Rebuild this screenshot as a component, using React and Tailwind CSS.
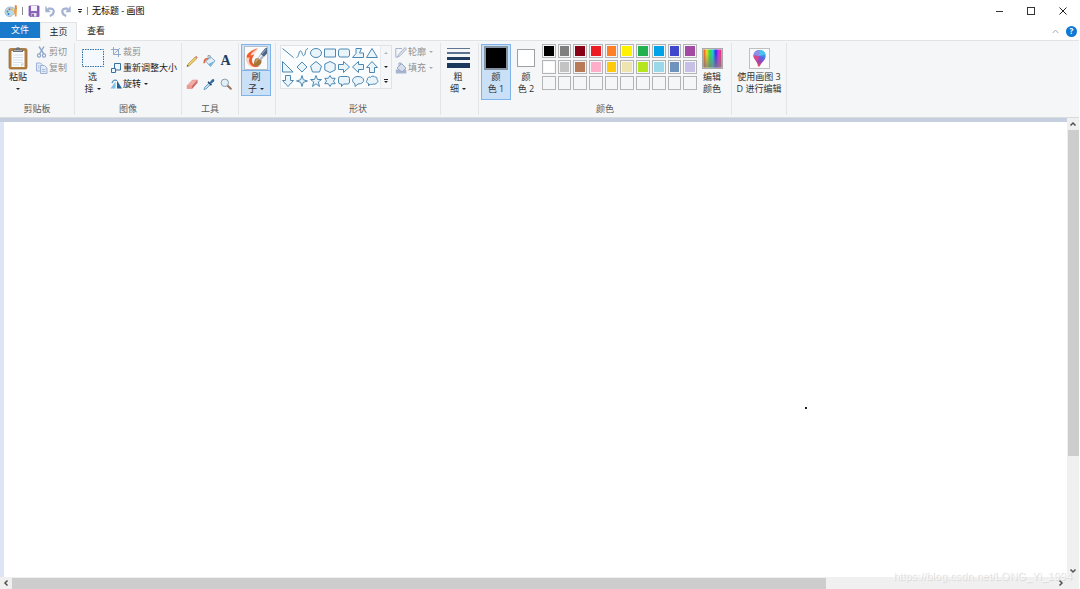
import React, { useState } from 'react';

const PALETTE = [
    '#000000', '#7f7f7f', '#880015', '#ed1c24', '#ff7f27', '#fff200', '#22b14c', '#00a2e8', '#3f48cc', '#a349a4',
    '#ffffff', '#c3c3c3', '#b97a57', '#ffaec9', '#ffc90e', '#efe4b0', '#b5e61d', '#99d9ea', '#7092be', '#c8bfe7',
    null, null, null, null, null, null, null, null, null, null,
];

// Outlines are drawn on a 14 x 14 grid
const SHAPES = [
    { name: '直线', d: 'M1.500 2.500 12.500 11.500' },
    { name: '曲线', d: 'M1.500 11.500C4 11.500 3.500 5 5.500 5S7 10.500 9 9.500 9.500 3 13 2.500' },
    { name: '椭圆形', d: 'M1.500 7a5.500 4.500 0 1 0 11 0a5.500 4.500 0 1 0-11 0Z' },
    { name: '矩形', d: 'M1.500 3h11v8h-11Z' },
    { name: '圆角矩形', d: 'M3.500 3h7a2 2 0 0 1 2 2v4a2 2 0 0 1-2 2h-7a2 2 0 0 1-2-2v-4a2 2 0 0 1 2-2Z' },
    { name: '多边形', d: 'M5 2.500h5.500L8.500 7h4v4.500h-11L5 7.500Z' },
    { name: '三角形', d: 'M7 2.500 12.500 11.500h-11Z' },
    { name: '直角三角形', d: 'M1.500 1.500v10.500h10.500Z' },
    { name: '菱形', d: 'M7 2 12 7 7 12 2 7Z' },
    { name: '五边形', d: 'M7 1.500 12.500 6 10.500 12h-7L1.500 6Z' },
    { name: '六边形', d: 'M7 1.500 12.200 4v6L7 12.500 1.800 10V4Z' },
    { name: '右箭头', d: 'M1.500 4.500h5V1.500L12.500 7l-6 5.500v-3h-5Z' },
    { name: '左箭头', d: 'M12.500 4.500h-5V1.500L1.500 7l6 5.500v-3h5Z' },
    { name: '向上箭头', d: 'M4.500 12.500v-5h-3L7 1.500l5.500 6h-3v5Z' },
    { name: '向下箭头', d: 'M4.500 1.500v5h-3l5.500 6 5.500-6h-3v-5Z' },
    { name: '四角星形', d: 'M7 1.500 8.300 5.700 12.500 7 8.300 8.300 7 12.500 5.700 8.300 1.500 7 5.700 5.700Z' },
    { name: '五角星形', d: 'M7 1.500 8.500 5.500h4L9.300 8l1.200 4.500L7 9.800 3.500 12.500 4.700 8 1.500 5.500h4Z' },
    { name: '六角星形', d: 'M7 1.500 8.700 4.300h3.500L10.500 7l1.700 2.700H8.700L7 12.500 5.300 9.700H1.800L3.500 7 1.800 4.300h3.500Z' },
    { name: '圆角矩形标注', d: 'M3.500 2.500h7a2 2 0 0 1 2 2V8a2 2 0 0 1-2 2H6.500l-2 2.500V10h-1a2 2 0 0 1-2-2V4.500a2 2 0 0 1 2-2Z' },
    { name: '椭圆形标注', d: 'M4 9.800C0 8 1 2.500 7 2.500c7.500 0 7.500 7.500 0 7.500L4 12.500Z' },
    { name: '云形标注', d: 'M3.500 9.500C1 9 1 6.500 2.500 6 1.500 3.500 4.500 2.500 5.500 3.300 7 1.500 9 2 9.500 3c2-.5 3 1 2.500 2.500 1.500 1 1 3-.5 3.500-.5 1.500-2.500 1.500-3.500.8C7 11 5.500 10.500 5 10l-1.500 2Z' },
];

const Caret = ({ className = 'text-[#222]' }) => (
    <svg viewBox="0 0 4 2" className={`w-1 h-[2px] shrink-0 ${className}`} fill="currentColor">
        <path d="M0 0h4L2 2Z" />
    </svg>
);

const Chevron = ({ rotate = 'rotate-0' }) => (
    <svg viewBox="0 0 8 8" className={`w-2 h-2 ${rotate}`} fill="none" stroke="#505050" strokeWidth="1.500">
        <path d="M1.500 5.500 4 3 6.500 5.500" />
    </svg>
);

const AppIcon = () => (
    <svg viewBox="0 0 14 14" className="w-[14px] h-[14px]">
        <path d="M1 8C1 4.500 4 2.500 7.500 3c3 .4 4.500 2.500 4 5-.4 2-2 2-2.700 2.700C8 11.500 7.500 13 5 12.500 2.500 12 1 10.500 1 8Z" fill="#b9d9ec" stroke="#7fa9c4" strokeWidth=".6" />
        <circle cx="3.500" cy="7.500" r="1" fill="#36a35c" />
        <circle cx="5.500" cy="5.200" r="1" fill="#e0503a" />
        <circle cx="8" cy="5.500" r="1" fill="#f2b531" />
        <circle cx="4.500" cy="10" r="1" fill="#3975c6" />
        <path d="M9.800 6.500 11.500 4h1.500L12.500 12.500h-1.500Z" fill="#eda04a" />
        <path d="M10.800 1 12.800 1.500v3.300h-2Z" fill="#e0853c" />
    </svg>
);

const SaveIcon = () => (
    <svg viewBox="0 0 12 12" className="w-3 h-3">
        <path d="M1 1h10v10.500H2L1 10.500Z" fill="#8a63b8" stroke="#7a57a8" strokeWidth=".8" />
        <path d="M3 1h6v5H3Z" fill="#f5f1fa" />
        <path d="M3.500 8h5v3.500h-5Z" fill="#e9e2f2" />
        <path d="M4.300 8.800h1.400v2.700H4.300Z" fill="#5b3b8a" />
    </svg>
);

const UndoIcon = ({ flip = '' }) => (
    <svg viewBox="0 0 12 12" className={`w-3 h-3 ${flip}`} fill="none">
        <path d="M4 3.700h2.500c4.500 0 4.300 5.500-.7 7.300" stroke="#a4b3d1" strokeWidth="2.200" />
        <path d="M1.300.8v6.500h5.500Z" fill="#a4b3d1" />
    </svg>
);

const PasteIcon = () => (
    <svg viewBox="0 0 20 24" className="w-5 h-6">
        <rect x="1" y="2.500" width="18" height="20.500" rx="1.500" fill="#b5803f" stroke="#976730" strokeWidth=".7" />
        <path d="M3.500 5h13v16h-13Z" fill="#fbfcfe" />
        <path d="M5 9h10M5 11.500h10M5 14h10M5 16.500h10M5 19h6" stroke="#d3dfeb" strokeWidth="1" />
        <path d="M13 21v-3.500h3.500Z" fill="#ccd7e4" />
        <path d="M5 6V3.500h2.500C8 .5 12 .5 12.500 3.500H15V6Z" fill="#6d7278" />
        <path d="M6 4.500h8" stroke="#a9aeb4" />
    </svg>
);

const CutIcon = () => (
    <svg viewBox="0 0 12 12" className="w-3 h-3" fill="none" stroke="#8fa6cb">
        <path d="M3 .5 7.800 8M8 .5 3.500 8" strokeWidth="1.400" />
        <circle cx="3" cy="9.500" r="1.600" strokeWidth="1.200" />
        <circle cx="8" cy="9.500" r="1.600" strokeWidth="1.200" />
    </svg>
);

const CopyIcon = () => (
    <svg viewBox="0 0 12 12" className="w-3 h-3" fill="#e2eaf6" stroke="#9db2d6">
        <path d="M.5 1h4l2 2v6h-6Z" />
        <path d="M4.500 3.500h4l2.500 2.500v5.500H4.500Z" />
        <path d="M6 7.500h3.500M6 9.500h3.500M2 4h1.500M2 6h1.500" strokeWidth=".8" />
    </svg>
);

const CropIcon = () => (
    <svg viewBox="0 0 10 10" className="w-[10px] h-[10px]" fill="none" stroke="#93a9cb">
        <path d="M2.500 0v7.500H10M0 2.500h7.500V10M3.500 6.500 9 1" />
    </svg>
);

const ResizeIcon = () => (
    <svg viewBox="0 0 10 10" className="w-[10px] h-[10px]" fill="#eef6fd" stroke="#356f9f">
        <path d="M3.500.5h6V7h-6Z" />
        <path d="M.5 5.500h4v4h-4Z" />
    </svg>
);

const RotateIcon = () => (
    <svg viewBox="0 0 12 10" className="w-3 h-[10px]">
        <path d="M5.500 2.500v7H.5Z" fill="#7ec0e2" />
        <path d="M7 1.500v8h5Z" fill="#1d659b" />
        <path d="M2 4C3 1 5 .5 7 1.500" fill="none" stroke="#4389b9" strokeWidth="1.200" />
    </svg>
);

const PencilIcon = () => (
    <svg viewBox="0 0 12 12" className="w-3 h-3">
        <path d="M1 11.500 2 9 9 2l1.700 1.700L3.700 10.500Z" fill="#f0cd62" stroke="#a08a4a" strokeWidth=".6" />
        <path d="M9 2 10.200.8l1.600 1.600L10.700 3.700Z" fill="#d98276" />
        <path d="M1 11.500 1.600 9.900 2.600 10.900Z" fill="#333" />
    </svg>
);

const BucketIcon = () => (
    <svg viewBox="0 0 14 14" className="w-[14px] h-[14px]">
        <path d="M4 7.500 8 2.500l5 4.300-4.500 5.700Z" fill="#e2f0f9" stroke="#77a6c6" strokeWidth=".9" />
        <path d="M6.500 10 12.500 7 8.500 12.300Z" fill="#71b3dc" />
        <path d="M6 6V1.500h2V5" fill="none" stroke="#8296a6" strokeWidth=".8" />
        <path d="M6.500 4C3 3.500 1.300 5 1.500 9.500c1.500 0 2-.8 2-2.500Z" fill="#e06a42" />
    </svg>
);

const EraserIcon = () => (
    <svg viewBox="0 0 12 12" className="w-3 h-3">
        <path d="M.8 8 6.500 2h5L6 8Z" fill="#f4aca4" stroke="#d28880" strokeWidth=".5" />
        <path d="M6 8 11.500 2v2.800L6 11Z" fill="#cc6765" />
        <path d="M.8 8H6v3H.8Z" fill="#ec9a92" />
    </svg>
);

const PickerIcon = () => (
    <svg viewBox="0 0 12 12" className="w-3 h-3">
        <path d="M1 11.500 1.500 9.500 6 5l1.500 1.500L3 11Z" fill="#b8daee" stroke="#5a93bb" strokeWidth=".8" />
        <path d="M5 3.800 8.500 7.300" stroke="#203f66" strokeWidth="1.500" />
        <path d="M6.500 4.500 9 1.500c1.500-1.500 3 .5 2 1.700L8 6Z" fill="#2f6aa5" />
    </svg>
);

const ZoomIcon = () => (
    <svg viewBox="0 0 12 12" className="w-3 h-3">
        <path d="M7.500 7.500 10.800 10.800" stroke="#9a7762" strokeWidth="2" strokeLinecap="round" />
        <circle cx="4.800" cy="4.800" r="3.700" fill="#e0eff8" stroke="#8f9dac" />
    </svg>
);

const BrushIcon = () => (
    <svg viewBox="0 0 22 22" className="w-[22px] h-[22px]">
        <path d="M12 1C6 2.500 1 6.500 1 11.500 1 17 5 21 10.500 20.500c2.500-.2 4.500-1.500 5.500-3L9 17C6 16 5 13 6.500 10L13 2Z" fill="#fbd3c0" />
        <path d="M12.500 1.500C6.500 3 2 6.500 1.800 9.500c-.1 1.500 1.500 1.500 3 .8C3.300 13.500 4 17.500 7.500 19.200c2.500 1.200 5 .8 6.500-.2-4 0-7-2-7-5.500 0-2.300 1-4 2.300-6C7.800 7.700 6 8.800 5.500 8.300 5.500 6.500 9 4 12.500 1.500Z" fill="#ee5a2a" />
        <path d="M9.500 13.500c1-2.700 4.500-3.200 6.300-1.200 1.700 2.200.2 5.500-2.300 6.500-1.800.7-4.300.5-5.500-.3 1.500-1 .8-3.200 1.500-5Z" fill="#a5763c" />
        <path d="M10.500 13.500c1-1.500 2.500-2 3.500-1.500-1.500 1-2.500 3-3.500 4.500Z" fill="#d3a765" />
        <path d="M12.500 11.300 15.500 7l3.500 2.800-3 3.700Z" fill="#aeb7c2" />
        <path d="M13.500 11 16.200 7.500l1 .8-2.700 3.600Z" fill="#f0f3f6" />
        <path d="M15.500 7 20 1.500 22 .5v6L19 9.800Z" fill="#4c6484" />
        <path d="M16.500 7.500 21 2.200" stroke="#a9bace" strokeWidth=".9" />
    </svg>
);

const OutlineIcon = () => (
    <svg viewBox="0 0 12 12" className="w-3 h-3" fill="none" stroke="#a6b4cb">
        <path d="M7 2.500H.8v8.700h2" />
        <path d="M2.500 11 3.500 8.500 10 1.500l1.500 1.500L5 9.800Z" fill="#dbe3ee" />
    </svg>
);

const FillIcon = () => (
    <svg viewBox="0 0 12 12" className="w-3 h-3">
        <path d="M.8 7.500h10.500v4H.8Z" fill="#a5b4d0" />
        <path d="M2 6 6.500 1.500 11 6 7 10Z" fill="#d6deeb" stroke="#98a8c6" />
        <path d="M4 4V1h2v2" fill="none" stroke="#98a8c6" />
    </svg>
);

const SpectrumIcon = () => (
    <svg viewBox="0 0 21 21" className="w-[21px] h-[21px]">
        <defs>
            <linearGradient id="hue">
                <stop offset="0" stopColor="#f04030" />
                <stop offset=".18" stopColor="#e8e020" />
                <stop offset=".35" stopColor="#30d840" />
                <stop offset=".52" stopColor="#20c8e0" />
                <stop offset=".68" stopColor="#3030e8" />
                <stop offset=".85" stopColor="#e030e0" />
                <stop offset="1" stopColor="#f03050" />
            </linearGradient>
            <linearGradient id="fade" x2="0" y2="1">
                <stop offset=".2" stopColor="#808080" stopOpacity="0" />
                <stop offset="1" stopColor="#808080" stopOpacity=".8" />
            </linearGradient>
        </defs>
        <rect x=".5" y=".5" width="20" height="20" fill="#eee" stroke="#a8a8a8" />
        <rect x="1.500" y="1.500" width="18" height="18" fill="url(#hue)" />
        <rect x="1.500" y="1.500" width="18" height="18" fill="url(#fade)" />
    </svg>
);

const Paint3DIcon = () => (
    <svg viewBox="0 0 21 21" className="w-[21px] h-[21px]">
        <defs>
            <linearGradient id="drop" x1=".8" y1="0" x2=".3" y2="1">
                <stop offset="0" stopColor="#28c8f0" />
                <stop offset=".4" stopColor="#5a68e6" />
                <stop offset=".7" stopColor="#a040b5" />
                <stop offset="1" stopColor="#f25a3c" />
            </linearGradient>
        </defs>
        <rect x=".5" y=".5" width="20" height="20" fill="#fbfbfb" stroke="#c0c0c0" />
        <path d="M10.500 2C6.500 2 4.500 4.800 4.500 7.800c0 3.700 4 5.200 4.500 10.700 1 .3 1.500 0 2-.8 1-3.200 5.700-5.200 5.700-9.700C16.700 4.500 14 2 10.500 2Z" fill="url(#drop)" />
        <path d="M10.500 2C7 2 4.500 4.500 4.500 7.500L10 8Z" fill="#8f8fe8" />
        <path d="M4.500 7.500 10 8l-1 6C7 11.500 4.500 10.500 4.500 7.500Z" fill="#d8488c" />
        <path d="M10.500 2c3 0 5.500 1.500 6.200 4.500L10 8Z" fill="#48c2f2" />
    </svg>
);

const Group = ({ label, className = '', children }) => (
    <section aria-label={label} className={`flex flex-col justify-between shrink-0 border-r border-[#e2e4e7] pt-px ${className}`}>
        <div className="flex items-start">{children}</div>
        {label && <div className="text-center leading-3 text-[#5c5c5c]">{label}</div>}
    </section>
);

const SmallButton = ({ icon, label, caret, disabled }) => (
    <button type="button" disabled={disabled} className={`flex items-center gap-px h-4 whitespace-nowrap ${disabled ? 'text-[#8f8f8f]' : 'text-[#222]'}`}>
        <span className="flex justify-center w-3">{icon}</span>
        <span>{label}</span>
        {caret && <Caret className={disabled ? 'ml-[2px] text-[#aaa]' : 'ml-[2px] text-[#222]'} />}
    </button>
);

const BigButton = ({ icon, lines, caret, active, className = '', ...rest }) => (
    <button type="button" className={`flex flex-col items-center border leading-3 whitespace-nowrap ${active ? 'bg-[#c9e0f7] border-[#7eb4ea]' : 'border-transparent'} ${className}`} {...rest}>
        <span className="flex items-center justify-center h-[26px]">{icon}</span>
        {lines.map((line, i) => (
            <span key={i} className="flex items-center justify-center gap-[3px] h-3">
                {line}
                {caret && i === lines.length - 1 && <Caret />}
            </span>
        ))}
    </button>
);

const ToolButton = ({ label, children }) => (
    <button type="button" aria-label={label} className="flex items-center justify-center w-[17px] h-[23px]">{children}</button>
);

const TitleBar = () => (
    <header className="flex items-center justify-between h-[22px] shrink-0">
        <div className="flex items-center pl-1 gap-1">
            <AppIcon />
            <span className="w-px h-2 bg-[#8a8a8a]" />
            <button type="button" aria-label="保存" className="ml-px"><SaveIcon /></button>
            <button type="button" aria-label="撤消"><UndoIcon /></button>
            <button type="button" aria-label="重做"><UndoIcon flip="-scale-x-100" /></button>
            <button type="button" aria-label="自定义快速访问工具栏" className="flex flex-col items-center gap-px w-[7px]">
                <span className="w-1 h-px bg-[#222]" />
                <Caret />
            </button>
            <span className="w-px h-2 bg-[#8a8a8a]" />
            <h1 className="text-black">无标题 - 画图</h1>
        </div>
        <div className="flex h-full">
            <button type="button" aria-label="最小化" className="flex items-center justify-center w-8">
                <span className="w-[7px] h-px bg-[#333]" />
            </button>
            <button type="button" aria-label="最大化" className="flex items-center justify-center w-8">
                <span className="w-2 h-2 border border-[#333]" />
            </button>
            <button type="button" aria-label="关闭" className="flex items-center justify-center w-8">
                <svg viewBox="0 0 8 8" className="w-2 h-2" stroke="#222"><path d="M.5.5l7 7M7.500.5l-7 7" /></svg>
            </button>
        </div>
    </header>
);

const TabBar = () => (
    <nav className="flex items-stretch justify-between h-[19px] shrink-0 border-b border-[#e2e3e4]">
        <div className="flex">
            <button type="button" className="w-10 h-4 bg-[#1979ca] text-white">文件</button>
            <button type="button" className="w-[37px] h-[19px] border border-b-0 border-[#e2e3e4] bg-[#f5f6f7] text-[#222]">主页</button>
            <button type="button" className="w-[38px] h-[18px] text-[#222]">查看</button>
        </div>
        <div className="flex items-center gap-[7px] pr-[2px]">
            <button type="button" aria-label="折叠功能区">
                <svg viewBox="0 0 7 5" className="w-[7px] h-[5px]" fill="none" stroke="#aaa"><path d="M.7 4 3.500 1 6.300 4" /></svg>
            </button>
            <button type="button" aria-label="帮助" className="flex items-center justify-center w-[11px] h-[11px] rounded-full bg-[#0f78d4] text-white text-[8px] font-bold">?</button>
        </div>
    </nav>
);

const Ribbon = ({ slot, onSlotChange, colors, onPick }) => (
    <div className="flex items-stretch h-[77px] shrink-0 py-[2px] bg-[#f5f6f7] border-b border-[#dadbdc]">
        <Group label="剪贴板" className="w-[75px]">
            <button type="button" className="flex flex-col items-center w-9 leading-3 text-[#222]">
                <span className="flex items-center h-[27px]"><PasteIcon /></span>
                粘贴
                <span className="flex items-center h-3"><Caret /></span>
            </button>
            <div>
                <SmallButton icon={<CutIcon />} label="剪切" disabled />
                <SmallButton icon={<CopyIcon />} label="复制" disabled />
            </div>
        </Group>

        <Group label="图像" className="w-[107px]">
            <BigButton
                className="w-[35px]"
                icon={<svg viewBox="0 0 22 18" className="w-[22px] h-[18px]"><path d="M.5.5h21v17H.5Z" fill="#f3f9fe" stroke="#2c6ea6" strokeDasharray="1.500 1" /></svg>}
                lines={['选', '择']}
                caret
            />
            <div>
                <SmallButton icon={<CropIcon />} label="裁剪" disabled />
                <SmallButton icon={<ResizeIcon />} label="重新调整大小" />
                <SmallButton icon={<RotateIcon />} label="旋转" caret />
            </div>
        </Group>

        <Group label="工具" className="w-[57px]">
            <div className="grid grid-cols-3 mx-px mt-[5px]">
                <ToolButton label="铅笔"><PencilIcon /></ToolButton>
                <ToolButton label="用颜色填充"><BucketIcon /></ToolButton>
                <ToolButton label="文本"><span className="font-['Liberation_Serif',serif] font-bold text-sm text-[#203a5e]">A</span></ToolButton>
                <ToolButton label="橡皮擦"><EraserIcon /></ToolButton>
                <ToolButton label="颜色选取器"><PickerIcon /></ToolButton>
                <ToolButton label="放大镜"><ZoomIcon /></ToolButton>
            </div>
        </Group>

        <Group className="w-[37px]">
            <BigButton
                active
                aria-label="刷子"
                className="w-[30px] h-[52px] mx-[2px]"
                icon={<span className="flex items-center justify-center w-7 h-[26px] border-b border-[#7eb4ea]"><span className="bg-[#f8fafc] border border-[#b5bfca]"><BrushIcon /></span></span>}
                lines={['刷', '子']}
                caret
            />
        </Group>

        <Group label="形状" className="w-[165px]">
            <div className="flex ml-1 mt-px border border-[#dfe3e8] bg-[#fbfcfd]">
                <div className="grid grid-cols-7">
                    {SHAPES.map((shape) => (
                        <button key={shape.name} type="button" aria-label={shape.name} className="w-[14px] h-[14px]">
                            <svg viewBox="0 0 14 14" className="w-[14px] h-[14px]" fill="#e9f4fb" stroke="#4d88b3" strokeWidth="1">
                                <path d={shape.d} fill={shape.name === '直线' || shape.name === '曲线' ? 'none' : undefined} />
                            </svg>
                        </button>
                    ))}
                </div>
                <div className="flex flex-col w-[11px] ml-px border-l border-[#e6e9ed] bg-[#f5f6f7]">
                    <button type="button" aria-label="向上滚动" className="flex items-center justify-center h-[14px] rotate-180"><Caret className="text-[#b0b5bc]" /></button>
                    <button type="button" aria-label="向下滚动" className="flex items-center justify-center h-[14px]"><Caret /></button>
                    <button type="button" aria-label="更多形状" className="flex flex-col items-center justify-center gap-px h-[14px]">
                        <span className="w-1 h-px bg-[#222]" />
                        <Caret />
                    </button>
                </div>
            </div>
            <div className="ml-[3px]">
                <SmallButton icon={<OutlineIcon />} label="轮廓" caret disabled />
                <SmallButton icon={<FillIcon />} label="填充" caret disabled />
            </div>
        </Group>

        <Group className="w-[38px]">
            <BigButton
                className="w-[34px]"
                icon={
                    <span className="flex flex-col gap-[3px]">
                        <span className="w-[23px] h-px bg-[#5f7590]" />
                        <span className="w-[23px] h-[2px] bg-[#5b7390]" />
                        <span className="w-[23px] h-[3px] bg-[#1f3b5e]" />
                        <span className="w-[23px] h-[5px] bg-[#1b375a]" />
                    </span>
                }
                lines={['粗', '细']}
                caret
            />
        </Group>

        <Group label="颜色" className="w-[253px]">
            <BigButton
                active={slot === 0}
                onClick={() => onSlotChange(0)}
                className="w-[30px] h-[56px] ml-[2px]"
                icon={<span className="w-6 h-6 border-2 border-[#8593a3]" style={{ backgroundColor: colors[0] }} />}
                lines={['颜', '色 1']}
            />
            <BigButton
                active={slot === 1}
                onClick={() => onSlotChange(1)}
                className="w-[30px] h-[56px]"
                icon={<span className="w-[18px] h-[18px] border border-[#a0a0a0]" style={{ backgroundColor: colors[1] }} />}
                lines={['颜', '色 2']}
            />
            <div className="grid grid-cols-10 gap-[2px] w-[155px] ml-px">
                {PALETTE.map((color, i) => (
                    <button
                        key={i}
                        type="button"
                        aria-label={color || '自定义颜色'}
                        disabled={!color}
                        onClick={() => onPick(color)}
                        className="h-[14px] border border-[#b4b4b4] p-px"
                    >
                        {color && <span className="block h-full" style={{ backgroundColor: color }} />}
                    </button>
                ))}
            </div>
            <BigButton className="w-[30px]" icon={<SpectrumIcon />} lines={['编辑', '颜色']} />
        </Group>

        <Group className="w-[55px]">
            <BigButton className="w-[54px]" icon={<Paint3DIcon />} lines={['使用画图 3', 'D 进行编辑']} />
        </Group>
    </div>
);

const VerticalScrollbar = () => (
    <div className="flex flex-col w-3 shrink-0 bg-[#f0f0f0]">
        <button type="button" aria-label="向上" className="flex items-center justify-center h-3"><Chevron /></button>
        <div className="flex-1">
            <div className="w-[11px] ml-px h-3/4 bg-[#cdcdcd]" />
        </div>
        <button type="button" aria-label="向下" className="flex items-center justify-center h-3"><Chevron rotate="rotate-180" /></button>
    </div>
);

const HorizontalScrollbar = () => (
    <div className="flex h-3 shrink-0 pr-3 bg-[#f0f0f0]">
        <button type="button" aria-label="向左" className="flex items-center justify-center w-3"><Chevron rotate="-rotate-90" /></button>
        <div className="flex-1">
            <div className="w-[78%] h-[11px] mt-px bg-[#cdcdcd]" />
        </div>
        <button type="button" aria-label="向右" className="flex items-center justify-center w-3"><Chevron rotate="rotate-90" /></button>
    </div>
);

const App = () => {
    const [slot, setSlot] = useState(0);
    const [colors, setColors] = useState(['#000000', '#ffffff']);

    const handlePick = (color) => {
        setColors(colors.map((c, i) => (i === slot ? color : c)));
    };

    return (
        <div className="relative flex flex-col h-screen pr-px overflow-hidden bg-white font-['Open_Sans','Noto_Sans_CJK_SC',sans-serif] text-[9px] text-[#333]">
            <TitleBar />
            <TabBar />
            <Ribbon slot={slot} onSlotChange={setSlot} colors={colors} onPick={handlePick} />
            <main className="flex flex-1 min-h-0">
                <div className="flex flex-1 min-w-0 border-t-4 border-[#c5cfe0]">
                    <div className="w-1 bg-[#dce6f4]" />
                    <div className="relative flex-1 bg-white">
                        <span className="absolute left-[801px] top-[285px] w-[2px] h-[2px] bg-[#222]" />
                    </div>
                </div>
                <VerticalScrollbar />
            </main>
            <HorizontalScrollbar />
            <p className="absolute right-2 bottom-[6px] font-['Liberation_Sans',sans-serif] text-[11px] leading-[14px] text-white/70 [text-shadow:1px_1px_1px_#d4d4d4] pointer-events-none">
                https://blog.csdn.net/LONG_Yi_1994
            </p>
        </div>
    );
};

export default App;
